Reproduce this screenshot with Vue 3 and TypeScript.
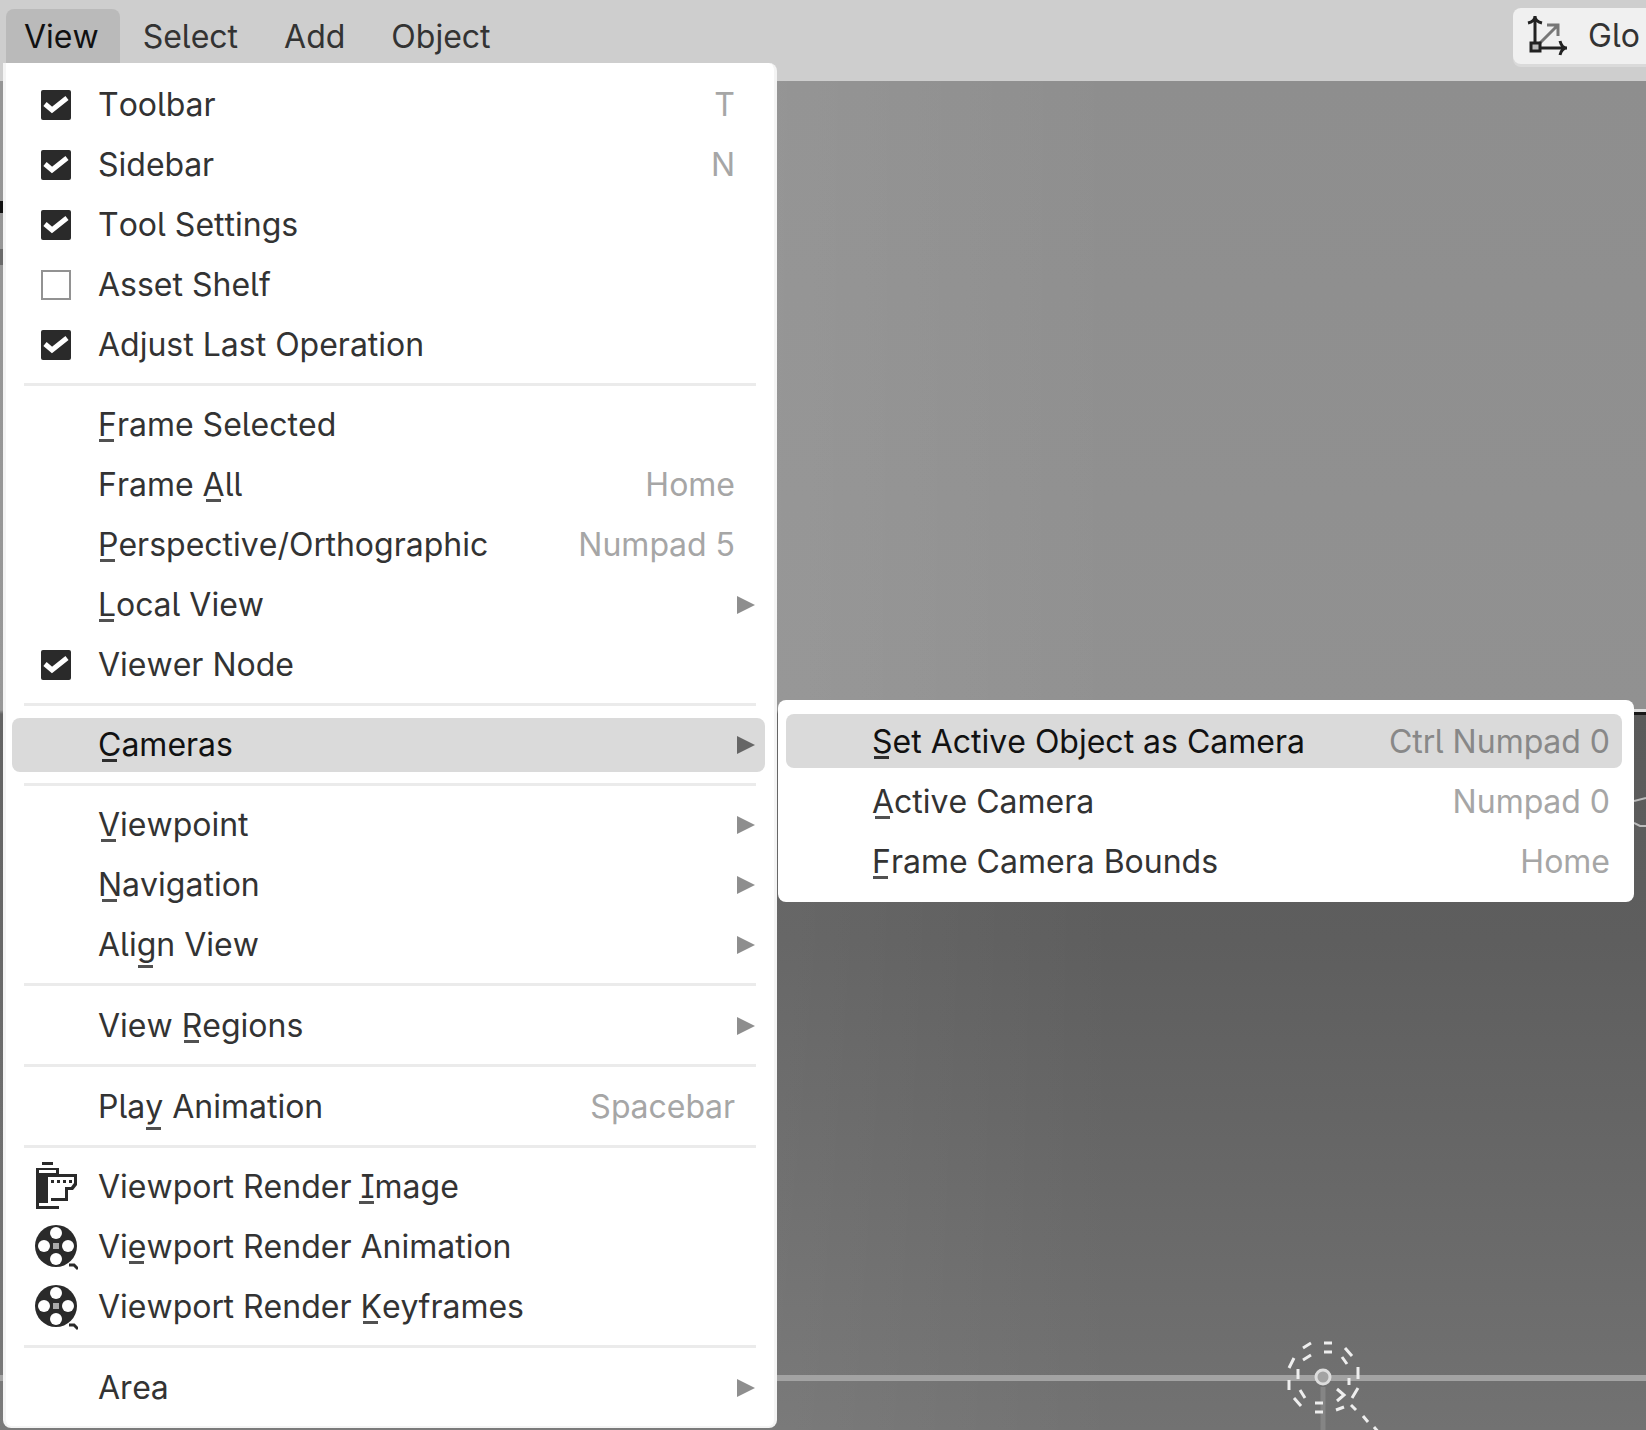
<script setup lang="ts">
interface Entry {
  label: string
  // Index of the accelerator letter inside the label
  key?: number
  shortcut?: string
  checked?: boolean
  icon?: 'image' | 'reel'
  submenu?: boolean
  active?: boolean
}

const menus = ['View', 'Select', 'Add', 'Object']

const groups: Entry[][] = [
  [
    { label: 'Toolbar', checked: true, shortcut: 'T' },
    { label: 'Sidebar', checked: true, shortcut: 'N' },
    { label: 'Tool Settings', checked: true },
    { label: 'Asset Shelf', checked: false },
    { label: 'Adjust Last Operation', checked: true },
  ],
  [
    { label: 'Frame Selected', key: 0 },
    { label: 'Frame All', key: 6, shortcut: 'Home' },
    { label: 'Perspective/Orthographic', key: 0, shortcut: 'Numpad 5' },
    { label: 'Local View', key: 0, submenu: true },
    { label: 'Viewer Node', checked: true },
  ],
  [{ label: 'Cameras', key: 0, submenu: true, active: true }],
  [
    { label: 'Viewpoint', key: 0, submenu: true },
    { label: 'Navigation', key: 0, submenu: true },
    { label: 'Align View', key: 3, submenu: true },
  ],
  [{ label: 'View Regions', key: 5, submenu: true }],
  [{ label: 'Play Animation', key: 3, shortcut: 'Spacebar' }],
  [
    { label: 'Viewport Render Image', key: 16, icon: 'image' },
    { label: 'Viewport Render Animation', key: 2, icon: 'reel' },
    { label: 'Viewport Render Keyframes', key: 16, icon: 'reel' },
  ],
  [{ label: 'Area', submenu: true }],
]

const cameraEntries: Entry[] = [
  { label: 'Set Active Object as Camera', key: 0, shortcut: 'Ctrl Numpad 0', active: true },
  { label: 'Active Camera', key: 0, shortcut: 'Numpad 0' },
  { label: 'Frame Camera Bounds', key: 0, shortcut: 'Home' },
]

const before = (e: Entry) => (e.key === undefined ? e.label : e.label.slice(0, e.key))
const letter = (e: Entry) => (e.key === undefined ? '' : e.label[e.key])
const after = (e: Entry) => (e.key === undefined ? '' : e.label.slice(e.key + 1))
const isLow = (e: Entry) => /[gy]/.test(letter(e))
</script>

<template>
  <div class="editor">
    <header class="bar">
      <nav class="menus">
        <button v-for="(m, i) in menus" :key="m" class="menu-title" :class="{ open: i === 0 }">{{ m }}</button>
      </nav>
      <button class="orientation">
        <svg width="44" height="44" viewBox="0 0 44 44" fill="none">
          <path d="M9 30V3M2 9C6 8 9 6 9 2C9 6 12 8 16 9" stroke="#222" stroke-width="3" />
          <path d="M11 34h29M34 27C35 31 37 34 41 34C37 34 35 37 34 41" stroke="#222" stroke-width="3" />
          <path d="M14 29L31 12M21 11h11v11" stroke="#777" stroke-width="3" />
          <rect x="5" y="29" width="9" height="8" fill="#bbb" stroke="#222" stroke-width="3" />
        </svg>
        <span>Glo</span>
      </button>
    </header>

    <main class="viewport">
      <div class="edge-marks"></div>
      <div class="horizon"></div>
      <svg class="camera" width="12" height="40" viewBox="0 0 12 40" fill="none" stroke="#bbb" stroke-width="2">
        <path d="M0 4L12 1M0 26L6 29L12 29" />
      </svg>
      <div class="axis"></div>
      <svg class="light" width="120" height="100" viewBox="0 0 120 100" fill="none">
        <path d="M43 52V100" stroke="#858585" stroke-width="5" />
        <g stroke="#eee" stroke-width="3">
          <circle cx="43" cy="42" r="7" stroke="#ddd" fill="#a3a3a3" />
          <path d="M44 8h8M44 17h8M23 13l8-5M23 25l8-5M9 33l5-10M18 44V34M9 45v10M20 55l5 8M14 63l7 8M35 68h8M35 77h8M56 75l8-3M57 54l7 6-7 6M72 63l6-10M69 50V43M78 44V32M62 22l5 7M65 13l7 8M71 70l5 5M83 81l5 6M94 92l6 7" />
        </g>
      </svg>
    </main>

    <div class="menu view-menu" role="menu">
      <div v-for="(g, gi) in groups" :key="gi" class="group">
        <template v-for="e in g" :key="e.label">
          <label v-if="e.checked !== undefined" class="row">
            <span class="slot"><input type="checkbox" :checked="e.checked" /></span>
            <span class="label">{{ e.label }}</span>
            <kbd v-if="e.shortcut">{{ e.shortcut }}</kbd>
          </label>
          <button v-else class="row" :class="{ active: e.active }">
            <span class="slot">
              <svg v-if="e.icon === 'image'" width="44" height="50" viewBox="0 0 44 50">
                <path d="M8 0h11v3H8zM2 6h23v6h18v11l-4 5h-5v11H17v-3h14V25h6l3-4v-6H14v26H5v3h20v3H2zM5 8v3h17V8z" fill="#2a2a2a" fill-rule="evenodd" />
                <path d="M17 18h3v3h-3zM23 18h3v3h-3zM29 18h3v3h-3zM35 18h3v3h-3z" fill="#2a2a2a" />
              </svg>
              <svg v-else-if="e.icon === 'reel'" width="44" height="48" viewBox="0 0 44 48">
                <circle cx="22" cy="23" r="21" fill="#2a2a2a" />
                <g fill="#fff">
                  <circle cx="22" cy="10" r="6" /><circle cx="22" cy="36" r="6" />
                  <circle cx="10" cy="23" r="6" /><circle cx="34" cy="23" r="6" />
                </g>
                <rect x="19" y="20" width="6" height="6" fill="#aaa" />
                <path d="M35 42h5l4 4" fill="none" stroke="#2a2a2a" stroke-width="3" />
              </svg>
            </span>
            <span class="label">{{ before(e) }}<u v-if="e.key !== undefined" :class="{ low: isLow(e) }">{{ letter(e) }}</u>{{ after(e) }}</span>
            <kbd v-if="e.shortcut">{{ e.shortcut }}</kbd>
            <svg v-if="e.submenu" class="arrow" width="18" height="18" viewBox="0 0 18 18"><path d="M0 0L18 9L0 18z" fill="currentColor" /></svg>
          </button>
        </template>
      </div>
    </div>

    <div class="menu camera-menu" role="menu">
      <button v-for="e in cameraEntries" :key="e.label" class="row" :class="{ active: e.active }">
        <span class="slot"></span>
        <span class="label">{{ before(e) }}<u>{{ letter(e) }}</u>{{ after(e) }}</span>
        <kbd>{{ e.shortcut }}</kbd>
      </button>
    </div>
  </div>
</template>

<style>
body {
  margin: 0;
}
</style>

<style scoped>
.editor {
  position: relative;
  display: flex;
  flex-direction: column;
  min-height: 100vh;
  overflow: hidden;
  background: #909090;
  color: #333;
  font: 400 32px/40px Inter, "Liberation Sans", sans-serif;
  font-feature-settings: "cv05", "cv08";
  font-kerning: none;
}
button {
  border: 0;
  padding: 0;
  background: none;
  color: inherit;
  font: inherit;
  font-feature-settings: inherit;
  font-kerning: inherit;
  text-align: left;
  white-space: nowrap;
}
.bar {
  display: flex;
  justify-content: space-between;
  height: 81px;
  background: #cecece;
  overflow: hidden;
}
.menus {
  display: flex;
  padding: 9px 0 0 6px;
}
.menu-title {
  height: 56px;
  padding: 0 23px;
  border-radius: 8px 8px 0 0;
}
.menu-title.open {
  padding: 0 21px 0 18px;
  background: #bababa;
  color: #111;
}
.orientation {
  display: flex;
  align-items: center;
  gap: 18px;
  width: 133px;
  height: 56px;
  margin-top: 8px;
  padding-left: 13px;
  box-sizing: border-box;
  border-radius: 8px 0 0 8px;
  background: #f0f0f0;
  box-shadow: 0 3px 0 #dadada;
  overflow: hidden;
}
.orientation svg {
  flex: none;
}
.viewport {
  position: relative;
  flex: 1;
  background:
    linear-gradient(90deg, #ffffff10 46%, #fff0 68%) no-repeat,
    linear-gradient(#8e8e8e 0, #919191 629px, #5a5a5a 633px, #5e5e5e 860px, #666 1060px, #727272 100%);
}
.edge-marks {
  position: absolute;
  top: 120px;
  left: 0;
  width: 3px;
  height: 12px;
  background: #111;
  box-shadow: 0 50px 0 2px #6a6a6a;
}
.horizon {
  position: absolute;
  top: 628px;
  left: 50%;
  right: 0;
  height: 3px;
  background: #ddd;
  border-bottom: 3px solid #181818;
}
.axis {
  position: absolute;
  top: 1294px;
  left: 0;
  right: 0;
  height: 6px;
  background: #a3a3a3;
}
.camera {
  position: absolute;
  top: 716px;
  right: 0;
}
.light {
  position: absolute;
  top: 1254px;
  left: 1280px;
}
.menu {
  position: absolute;
  box-sizing: border-box;
  background: #fff;
}
.view-menu {
  top: 63px;
  left: 3px;
  width: 774px;
  padding: 12px 9px 8px 6px;
  border: solid #f4f4f4;
  border-width: 0 3px 2px;
  border-radius: 0 8px 8px 8px;
}
.camera-menu {
  top: 700px;
  left: 778px;
  width: 856px;
  padding: 14px 12px 8px 8px;
  border-radius: 8px;
}
.group + .group {
  position: relative;
  padding-top: 20px;
}
.group + .group::before {
  content: "";
  position: absolute;
  top: 8px;
  left: 12px;
  right: 9px;
  height: 3px;
  background: #ebebeb;
}
.row {
  display: flex;
  align-items: center;
  box-sizing: border-box;
  width: 100%;
  border-radius: 8px;
}
.group .row {
  height: 60px;
  padding-right: 30px;
}
.group .row:only-child {
  height: 61px;
}
.group .row.active {
  height: 54px;
  margin: 3px 0;
}
.camera-menu .row {
  height: 54px;
  margin-bottom: 6px;
  padding: 1px 12px 0 0;
}
.active {
  background: #dadada;
  color: #111;
}
.slot {
  display: flex;
  justify-content: center;
  flex: none;
  box-sizing: border-box;
  width: 86px;
  padding-left: 2px;
}
.label {
  flex: 1;
}
u {
  position: relative;
  text-decoration: none;
}
u::after {
  content: "";
  position: absolute;
  top: 34px;
  left: calc(50% - 8px);
  width: 15px;
  height: 3px;
  background: currentColor;
  opacity: 0.85;
}
u.low::after {
  top: 40px;
}
kbd {
  font: inherit;
  font-feature-settings: inherit;
  font-kerning: inherit;
  color: #a6a6a6;
}
.active kbd {
  color: #888;
}
.arrow {
  color: #8e8e8e;
  margin-right: -20px;
}
.active .arrow {
  color: #666;
}
input {
  appearance: none;
  width: 30px;
  height: 30px;
  margin: 0;
  border: 2px solid #929292;
  background: #fff;
}
input:checked {
  border: 0;
  border-radius: 2px;
  background: #2a2a2a url("data:image/svg+xml,%3Csvg xmlns='http://www.w3.org/2000/svg' viewBox='0 0 30 30'%3E%3Cpath d='M4 14l7 6L26 8' fill='none' stroke='%23fff' stroke-width='5'/%3E%3C/svg%3E");
}
</style>
